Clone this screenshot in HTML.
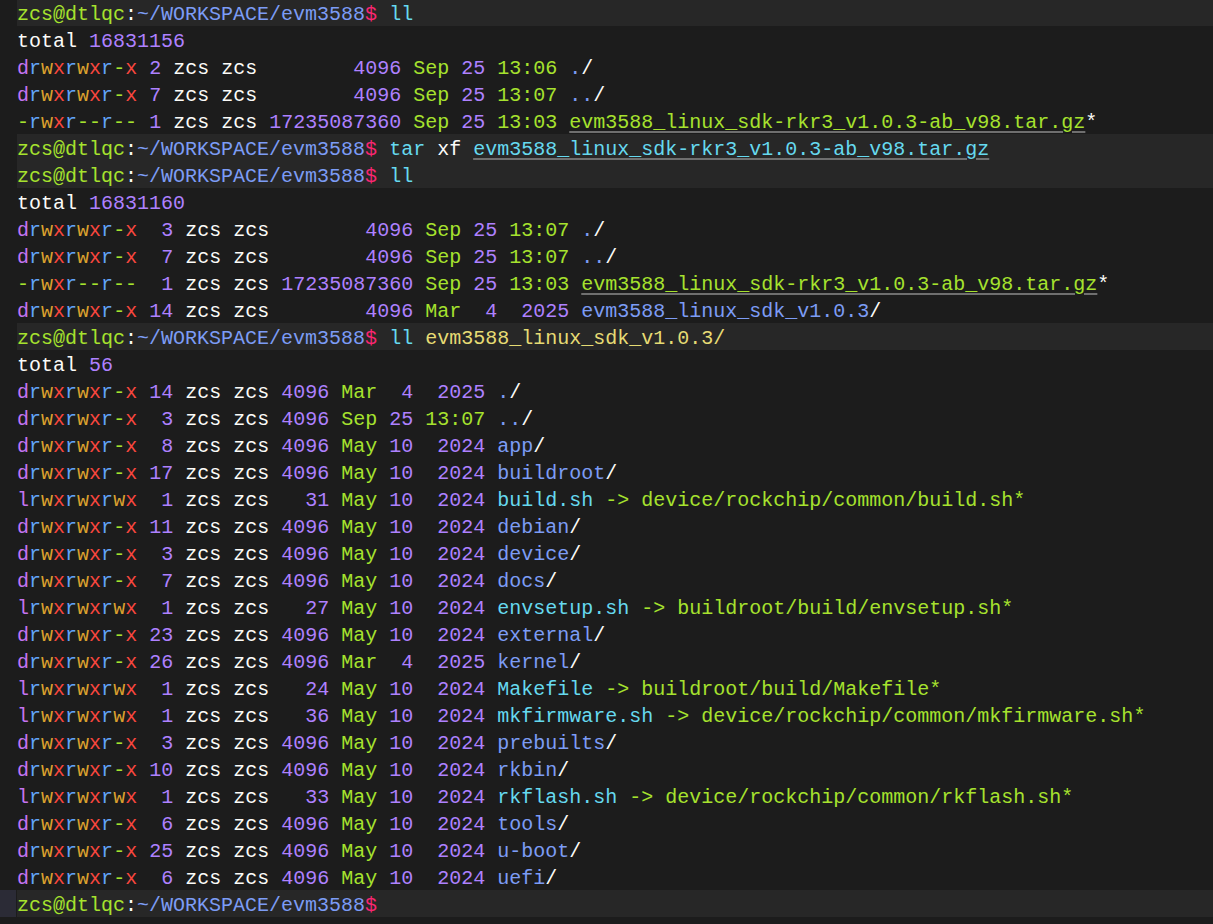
<!DOCTYPE html><html><head><meta charset="utf-8"><title>terminal</title><style>
html,body{margin:0;padding:0;background:#1c1c1c;}
body{width:1213px;height:924px;overflow:hidden;position:relative;}
#t{position:absolute;left:0;top:-1px;width:1213px;font-family:"Liberation Mono","DejaVu Sans Mono",monospace;font-size:20px;line-height:27px;color:#fbfbf8;letter-spacing:0;font-variant-ligatures:none;}
.ln{white-space:pre;height:27px;padding-left:17px;position:relative;}
.ln>i{font-style:normal;display:block;position:relative;top:2px;height:27px;}
.prompt::before{content:"";position:absolute;left:17px;right:0;top:0;height:27px;background:#272727;}
.last::after{content:"";position:absolute;left:0;width:16px;top:0;height:27px;background:#2b2b36;}
.w{color:#fbfbf8}.g{color:#a6e22e}.b{color:#7c9cf5}.k{color:#f92672}.c{color:#66d9ef}
.p{color:#ae81ff}.o{color:#dba02e}.rb{color:#62a4f8}.y{color:#e6db74}
.x{color:#f8463e}.m{color:#c474f2}
.u{text-decoration:underline;text-decoration-color:#6f6f6f;text-decoration-thickness:2px;text-underline-offset:3px;}
</style></head><body><div id="t">
<div class="ln prompt"><i><span class="g">zcs@dtlqc</span><span class="w">:</span><span class="b">~/WORKSPACE/evm3588</span><span class="k">$</span> <span class="c">ll</span></i></div>
<div class="ln "><i><span class="w">total </span><span class="p">16831156</span></i></div>
<div class="ln "><i><span class="m">d</span><span class="rb">r</span><span class="o">w</span><span class="x">x</span><span class="rb">r</span><span class="o">w</span><span class="x">x</span><span class="rb">r</span><span class="g">-</span><span class="x">x</span><span class="p"> 2</span><span class="w"> zcs zcs</span><span class="p">        4096</span><span class="g"> Sep</span><span class="p"> 25</span><span class="g"> 13:06</span> <span class="b">.</span><span class="w">/</span></i></div>
<div class="ln "><i><span class="m">d</span><span class="rb">r</span><span class="o">w</span><span class="x">x</span><span class="rb">r</span><span class="o">w</span><span class="x">x</span><span class="rb">r</span><span class="g">-</span><span class="x">x</span><span class="p"> 7</span><span class="w"> zcs zcs</span><span class="p">        4096</span><span class="g"> Sep</span><span class="p"> 25</span><span class="g"> 13:07</span> <span class="b">..</span><span class="w">/</span></i></div>
<div class="ln "><i><span class="g">-</span><span class="rb">r</span><span class="o">w</span><span class="x">x</span><span class="rb">r</span><span class="g">--</span><span class="rb">r</span><span class="g">--</span><span class="p"> 1</span><span class="w"> zcs zcs</span><span class="p"> 17235087360</span><span class="g"> Sep</span><span class="p"> 25</span><span class="g"> 13:03</span> <span class="g u">evm3588_linux_sdk-rkr3_v1.0.3-ab_v98.tar.gz</span><span class="w">*</span></i></div>
<div class="ln prompt"><i><span class="g">zcs@dtlqc</span><span class="w">:</span><span class="b">~/WORKSPACE/evm3588</span><span class="k">$</span> <span class="c">tar</span><span class="w"> xf </span><span class="c u">evm3588_linux_sdk-rkr3_v1.0.3-ab_v98.tar.gz</span></i></div>
<div class="ln prompt"><i><span class="g">zcs@dtlqc</span><span class="w">:</span><span class="b">~/WORKSPACE/evm3588</span><span class="k">$</span> <span class="c">ll</span></i></div>
<div class="ln "><i><span class="w">total </span><span class="p">16831160</span></i></div>
<div class="ln "><i><span class="m">d</span><span class="rb">r</span><span class="o">w</span><span class="x">x</span><span class="rb">r</span><span class="o">w</span><span class="x">x</span><span class="rb">r</span><span class="g">-</span><span class="x">x</span><span class="p">  3</span><span class="w"> zcs zcs</span><span class="p">        4096</span><span class="g"> Sep</span><span class="p"> 25</span><span class="g"> 13:07</span> <span class="b">.</span><span class="w">/</span></i></div>
<div class="ln "><i><span class="m">d</span><span class="rb">r</span><span class="o">w</span><span class="x">x</span><span class="rb">r</span><span class="o">w</span><span class="x">x</span><span class="rb">r</span><span class="g">-</span><span class="x">x</span><span class="p">  7</span><span class="w"> zcs zcs</span><span class="p">        4096</span><span class="g"> Sep</span><span class="p"> 25</span><span class="g"> 13:07</span> <span class="b">..</span><span class="w">/</span></i></div>
<div class="ln "><i><span class="g">-</span><span class="rb">r</span><span class="o">w</span><span class="x">x</span><span class="rb">r</span><span class="g">--</span><span class="rb">r</span><span class="g">--</span><span class="p">  1</span><span class="w"> zcs zcs</span><span class="p"> 17235087360</span><span class="g"> Sep</span><span class="p"> 25</span><span class="g"> 13:03</span> <span class="g u">evm3588_linux_sdk-rkr3_v1.0.3-ab_v98.tar.gz</span><span class="w">*</span></i></div>
<div class="ln "><i><span class="m">d</span><span class="rb">r</span><span class="o">w</span><span class="x">x</span><span class="rb">r</span><span class="o">w</span><span class="x">x</span><span class="rb">r</span><span class="g">-</span><span class="x">x</span><span class="p"> 14</span><span class="w"> zcs zcs</span><span class="p">        4096</span><span class="g"> Mar</span><span class="p">  4</span><span class="p">  2025</span> <span class="b">evm3588_linux_sdk_v1.0.3</span><span class="w">/</span></i></div>
<div class="ln prompt"><i><span class="g">zcs@dtlqc</span><span class="w">:</span><span class="b">~/WORKSPACE/evm3588</span><span class="k">$</span> <span class="c">ll</span> <span class="y">evm3588_linux_sdk_v1.0.3/</span></i></div>
<div class="ln "><i><span class="w">total </span><span class="p">56</span></i></div>
<div class="ln "><i><span class="m">d</span><span class="rb">r</span><span class="o">w</span><span class="x">x</span><span class="rb">r</span><span class="o">w</span><span class="x">x</span><span class="rb">r</span><span class="g">-</span><span class="x">x</span><span class="p"> 14</span><span class="w"> zcs zcs</span><span class="p"> 4096</span><span class="g"> Mar</span><span class="p">  4</span><span class="p">  2025</span> <span class="b">.</span><span class="w">/</span></i></div>
<div class="ln "><i><span class="m">d</span><span class="rb">r</span><span class="o">w</span><span class="x">x</span><span class="rb">r</span><span class="o">w</span><span class="x">x</span><span class="rb">r</span><span class="g">-</span><span class="x">x</span><span class="p">  3</span><span class="w"> zcs zcs</span><span class="p"> 4096</span><span class="g"> Sep</span><span class="p"> 25</span><span class="g"> 13:07</span> <span class="b">..</span><span class="w">/</span></i></div>
<div class="ln "><i><span class="m">d</span><span class="rb">r</span><span class="o">w</span><span class="x">x</span><span class="rb">r</span><span class="o">w</span><span class="x">x</span><span class="rb">r</span><span class="g">-</span><span class="x">x</span><span class="p">  8</span><span class="w"> zcs zcs</span><span class="p"> 4096</span><span class="g"> May</span><span class="p"> 10</span><span class="p">  2024</span> <span class="b">app</span><span class="w">/</span></i></div>
<div class="ln "><i><span class="m">d</span><span class="rb">r</span><span class="o">w</span><span class="x">x</span><span class="rb">r</span><span class="o">w</span><span class="x">x</span><span class="rb">r</span><span class="g">-</span><span class="x">x</span><span class="p"> 17</span><span class="w"> zcs zcs</span><span class="p"> 4096</span><span class="g"> May</span><span class="p"> 10</span><span class="p">  2024</span> <span class="b">buildroot</span><span class="w">/</span></i></div>
<div class="ln "><i><span class="m">l</span><span class="rb">r</span><span class="o">w</span><span class="x">x</span><span class="rb">r</span><span class="o">w</span><span class="x">x</span><span class="rb">r</span><span class="o">w</span><span class="x">x</span><span class="p">  1</span><span class="w"> zcs zcs</span><span class="p">   31</span><span class="g"> May</span><span class="p"> 10</span><span class="p">  2024</span> <span class="c">build.sh</span><span class="g"> -&gt; device/rockchip/common/build.sh*</span></i></div>
<div class="ln "><i><span class="m">d</span><span class="rb">r</span><span class="o">w</span><span class="x">x</span><span class="rb">r</span><span class="o">w</span><span class="x">x</span><span class="rb">r</span><span class="g">-</span><span class="x">x</span><span class="p"> 11</span><span class="w"> zcs zcs</span><span class="p"> 4096</span><span class="g"> May</span><span class="p"> 10</span><span class="p">  2024</span> <span class="b">debian</span><span class="w">/</span></i></div>
<div class="ln "><i><span class="m">d</span><span class="rb">r</span><span class="o">w</span><span class="x">x</span><span class="rb">r</span><span class="o">w</span><span class="x">x</span><span class="rb">r</span><span class="g">-</span><span class="x">x</span><span class="p">  3</span><span class="w"> zcs zcs</span><span class="p"> 4096</span><span class="g"> May</span><span class="p"> 10</span><span class="p">  2024</span> <span class="b">device</span><span class="w">/</span></i></div>
<div class="ln "><i><span class="m">d</span><span class="rb">r</span><span class="o">w</span><span class="x">x</span><span class="rb">r</span><span class="o">w</span><span class="x">x</span><span class="rb">r</span><span class="g">-</span><span class="x">x</span><span class="p">  7</span><span class="w"> zcs zcs</span><span class="p"> 4096</span><span class="g"> May</span><span class="p"> 10</span><span class="p">  2024</span> <span class="b">docs</span><span class="w">/</span></i></div>
<div class="ln "><i><span class="m">l</span><span class="rb">r</span><span class="o">w</span><span class="x">x</span><span class="rb">r</span><span class="o">w</span><span class="x">x</span><span class="rb">r</span><span class="o">w</span><span class="x">x</span><span class="p">  1</span><span class="w"> zcs zcs</span><span class="p">   27</span><span class="g"> May</span><span class="p"> 10</span><span class="p">  2024</span> <span class="c">envsetup.sh</span><span class="g"> -&gt; buildroot/build/envsetup.sh*</span></i></div>
<div class="ln "><i><span class="m">d</span><span class="rb">r</span><span class="o">w</span><span class="x">x</span><span class="rb">r</span><span class="o">w</span><span class="x">x</span><span class="rb">r</span><span class="g">-</span><span class="x">x</span><span class="p"> 23</span><span class="w"> zcs zcs</span><span class="p"> 4096</span><span class="g"> May</span><span class="p"> 10</span><span class="p">  2024</span> <span class="b">external</span><span class="w">/</span></i></div>
<div class="ln "><i><span class="m">d</span><span class="rb">r</span><span class="o">w</span><span class="x">x</span><span class="rb">r</span><span class="o">w</span><span class="x">x</span><span class="rb">r</span><span class="g">-</span><span class="x">x</span><span class="p"> 26</span><span class="w"> zcs zcs</span><span class="p"> 4096</span><span class="g"> Mar</span><span class="p">  4</span><span class="p">  2025</span> <span class="b">kernel</span><span class="w">/</span></i></div>
<div class="ln "><i><span class="m">l</span><span class="rb">r</span><span class="o">w</span><span class="x">x</span><span class="rb">r</span><span class="o">w</span><span class="x">x</span><span class="rb">r</span><span class="o">w</span><span class="x">x</span><span class="p">  1</span><span class="w"> zcs zcs</span><span class="p">   24</span><span class="g"> May</span><span class="p"> 10</span><span class="p">  2024</span> <span class="c">Makefile</span><span class="g"> -&gt; buildroot/build/Makefile*</span></i></div>
<div class="ln "><i><span class="m">l</span><span class="rb">r</span><span class="o">w</span><span class="x">x</span><span class="rb">r</span><span class="o">w</span><span class="x">x</span><span class="rb">r</span><span class="o">w</span><span class="x">x</span><span class="p">  1</span><span class="w"> zcs zcs</span><span class="p">   36</span><span class="g"> May</span><span class="p"> 10</span><span class="p">  2024</span> <span class="c">mkfirmware.sh</span><span class="g"> -&gt; device/rockchip/common/mkfirmware.sh*</span></i></div>
<div class="ln "><i><span class="m">d</span><span class="rb">r</span><span class="o">w</span><span class="x">x</span><span class="rb">r</span><span class="o">w</span><span class="x">x</span><span class="rb">r</span><span class="g">-</span><span class="x">x</span><span class="p">  3</span><span class="w"> zcs zcs</span><span class="p"> 4096</span><span class="g"> May</span><span class="p"> 10</span><span class="p">  2024</span> <span class="b">prebuilts</span><span class="w">/</span></i></div>
<div class="ln "><i><span class="m">d</span><span class="rb">r</span><span class="o">w</span><span class="x">x</span><span class="rb">r</span><span class="o">w</span><span class="x">x</span><span class="rb">r</span><span class="g">-</span><span class="x">x</span><span class="p"> 10</span><span class="w"> zcs zcs</span><span class="p"> 4096</span><span class="g"> May</span><span class="p"> 10</span><span class="p">  2024</span> <span class="b">rkbin</span><span class="w">/</span></i></div>
<div class="ln "><i><span class="m">l</span><span class="rb">r</span><span class="o">w</span><span class="x">x</span><span class="rb">r</span><span class="o">w</span><span class="x">x</span><span class="rb">r</span><span class="o">w</span><span class="x">x</span><span class="p">  1</span><span class="w"> zcs zcs</span><span class="p">   33</span><span class="g"> May</span><span class="p"> 10</span><span class="p">  2024</span> <span class="c">rkflash.sh</span><span class="g"> -&gt; device/rockchip/common/rkflash.sh*</span></i></div>
<div class="ln "><i><span class="m">d</span><span class="rb">r</span><span class="o">w</span><span class="x">x</span><span class="rb">r</span><span class="o">w</span><span class="x">x</span><span class="rb">r</span><span class="g">-</span><span class="x">x</span><span class="p">  6</span><span class="w"> zcs zcs</span><span class="p"> 4096</span><span class="g"> May</span><span class="p"> 10</span><span class="p">  2024</span> <span class="b">tools</span><span class="w">/</span></i></div>
<div class="ln "><i><span class="m">d</span><span class="rb">r</span><span class="o">w</span><span class="x">x</span><span class="rb">r</span><span class="o">w</span><span class="x">x</span><span class="rb">r</span><span class="g">-</span><span class="x">x</span><span class="p"> 25</span><span class="w"> zcs zcs</span><span class="p"> 4096</span><span class="g"> May</span><span class="p"> 10</span><span class="p">  2024</span> <span class="b">u-boot</span><span class="w">/</span></i></div>
<div class="ln "><i><span class="m">d</span><span class="rb">r</span><span class="o">w</span><span class="x">x</span><span class="rb">r</span><span class="o">w</span><span class="x">x</span><span class="rb">r</span><span class="g">-</span><span class="x">x</span><span class="p">  6</span><span class="w"> zcs zcs</span><span class="p"> 4096</span><span class="g"> May</span><span class="p"> 10</span><span class="p">  2024</span> <span class="b">uefi</span><span class="w">/</span></i></div>
<div class="ln prompt last"><i><span class="g">zcs@dtlqc</span><span class="w">:</span><span class="b">~/WORKSPACE/evm3588</span><span class="k">$</span></i></div>
</div></body></html>
